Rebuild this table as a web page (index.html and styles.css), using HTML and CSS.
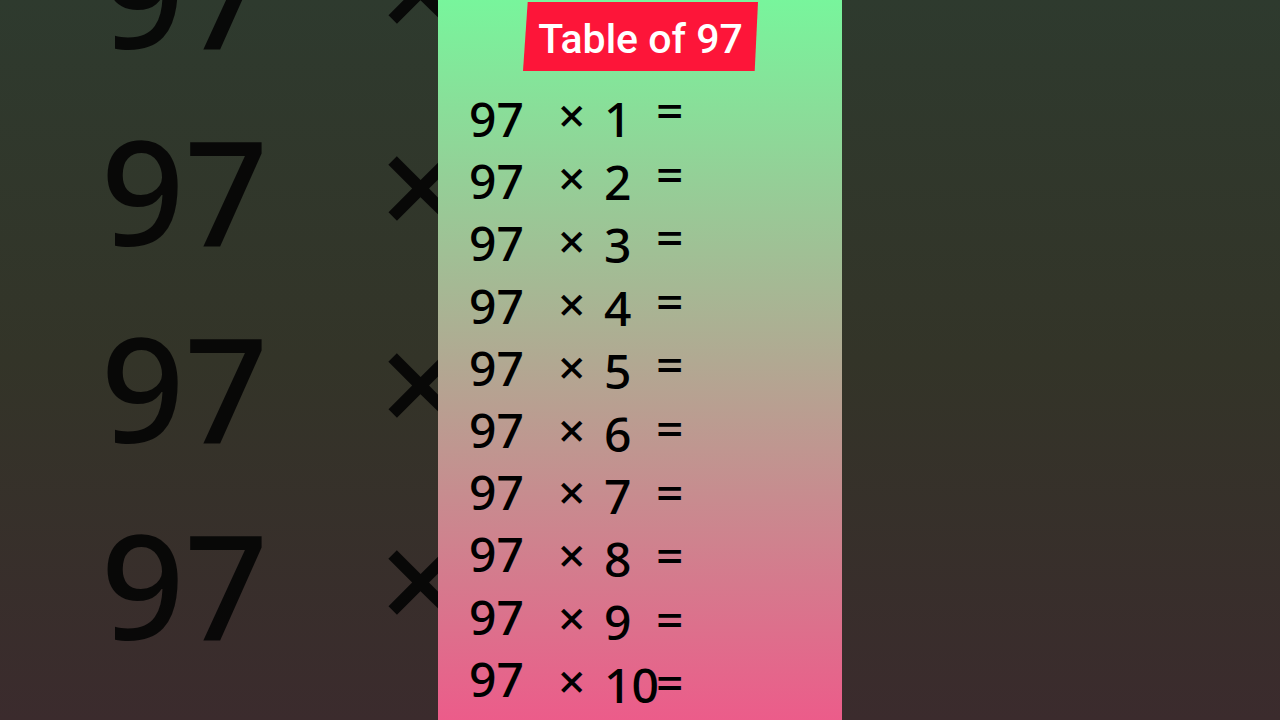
FILE: index.html
```html
<!DOCTYPE html>
<html lang="en">
<head>
    <title>Table of 97</title>
    <meta charset="UTF-8">
    <meta name="viewport" content="width=device-width, initial-scale=1.0">
    <link rel="stylesheet" href="styles.css">
</head>
<body>
    <div class="side side-left">
        <div class="big-col big-base">
            <span>97</span><span>97</span><span>97</span><span>97</span>
        </div>
        <div class="big-col big-times">
            <span>×</span><span>×</span><span>×</span><span>×</span>
        </div>
    </div>

    <div class="panel">
        <div class="title-wrap">
            <div class="title">Table of 97</div>
        </div>
        <div class="table">
            <div class="col col-base">
                <span>97</span><span>97</span><span>97</span><span>97</span><span>97</span>
                <span>97</span><span>97</span><span>97</span><span>97</span><span>97</span>
            </div>
            <div class="col col-times">
                <span>×</span><span>×</span><span>×</span><span>×</span><span>×</span>
                <span>×</span><span>×</span><span>×</span><span>×</span><span>×</span>
            </div>
            <div class="col col-mult">
                <span>1</span><span>2</span><span>3</span><span>4</span><span>5</span>
                <span>6</span><span>7</span><span>8</span><span>9</span><span>10</span>
            </div>
            <div class="col col-eq">
                <span>=</span><span>=</span><span>=</span><span>=</span><span>=</span>
                <span>=</span><span>=</span><span>=</span><span>=</span><span>=</span>
            </div>
        </div>
    </div>

    <div class="side side-right"></div>
</body>
</html>
```

FILE: styles.css
```css
body {
    margin: 0;
    width: 1280px;
    height: 720px;
    overflow: hidden;
    display: flex;
    font-family: "Noto Sans", "Open Sans", sans-serif;
    color: #000;
}
.side {
    flex: none;
    width: 438px;
    height: 720px;
    overflow: hidden;
    background: linear-gradient(to bottom, #2e3a2e 0%, #333428 50%, #3b2b2d 100%);
}
.side-left {
    display: flex;
}
.big-col {
    flex: none;
    display: flex;
    flex-direction: column;
    font-size: 146px;
    font-weight: 520;
    line-height: 197px;
    margin-top: -106px;
    color: #050505;
    opacity: 0.92;
    filter: blur(0.6px);
}
.big-base {
    width: 180px;
    padding-left: 101px;
}
.big-times {
    margin-top: -112px;
    padding-left: 98px;
}
.panel {
    flex: none;
    width: 404px;
    height: 720px;
    background: linear-gradient(to bottom, #78f59c 0%, #b1a992 50%, #ec5c8a 100%);
    display: flex;
    flex-direction: column;
}
.title-wrap {
    display: flex;
    justify-content: center;
    padding-top: 2px;
}
.title {
    width: 235px;
    height: 69px;
    margin-left: 1px;
    background-color: #fd1539;
    clip-path: polygon(2% 0, 100% 0, 98.6% 100%, 0 100%);
    color: #fff;
    font-family: Roboto, "Liberation Sans", sans-serif;
    font-weight: 500;
    font-size: 41px;
    line-height: 74px;
    text-align: center;
}
.table {
    display: flex;
}
.col {
    flex: none;
    display: flex;
    flex-direction: column;
    font-size: 48px;
    font-weight: 520;
}
.col-base {
    width: 89px;
    padding-left: 31px;
    line-height: 62.2px;
    margin-top: 17px;
}
.col-times {
    width: 46px;
    line-height: 62.9px;
    margin-top: 13px;
}
.col-mult {
    width: 52px;
    line-height: 62.9px;
    margin-top: 17px;
}
.col-eq {
    line-height: 63.6px;
    margin-top: 7px;
}
```
